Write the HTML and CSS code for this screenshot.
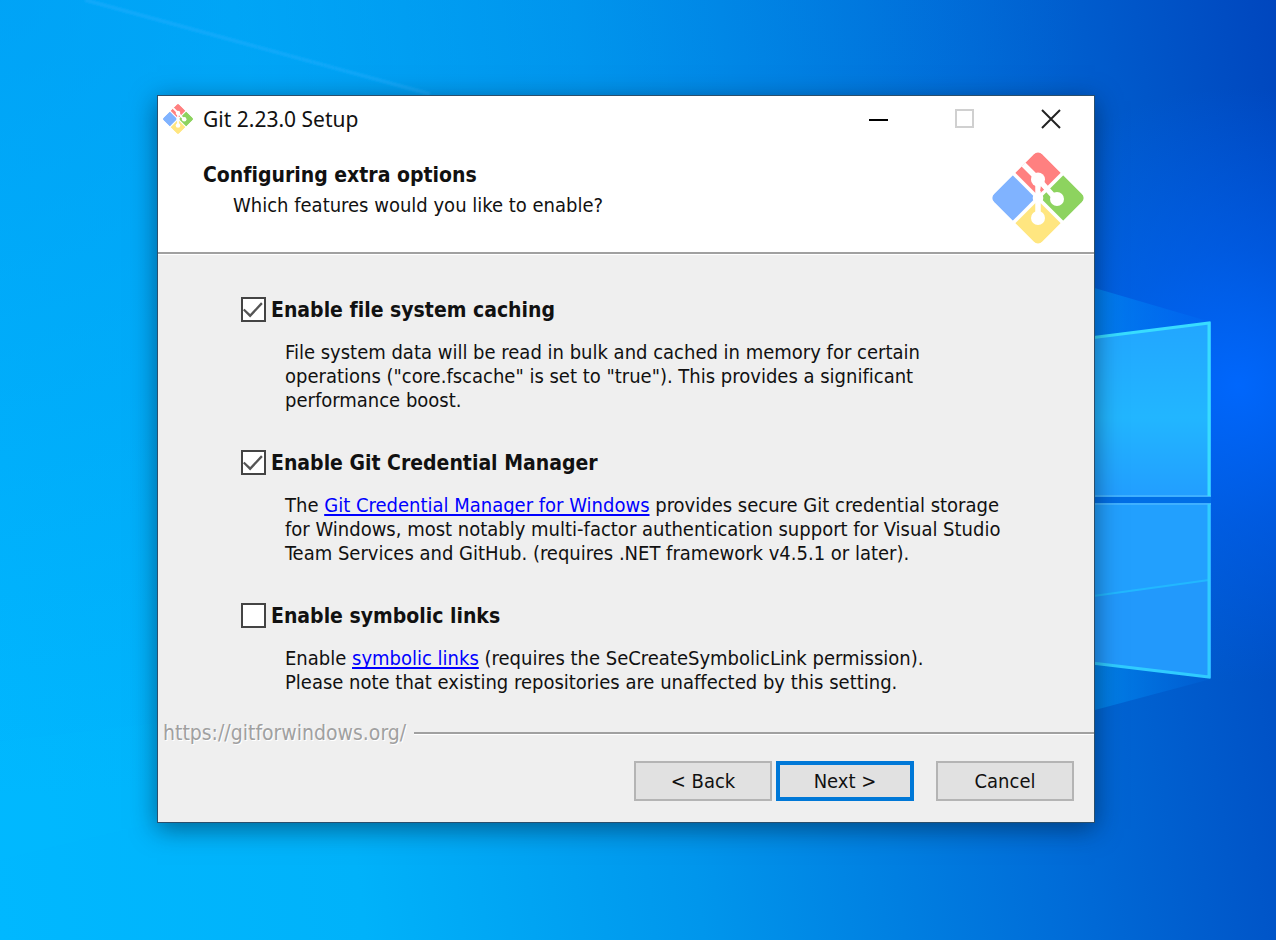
FILE: index.html
```html
<!DOCTYPE html>
<html lang="en">
<head>
<meta charset="utf-8">
<title>Git 2.23.0 Setup</title>
<link rel="stylesheet" href="styles.css">
</head>
<body>
<svg width="0" height="0" class="defs" aria-hidden="true">
  <symbol id="git-logo" viewBox="-46 -46 92 92">
    <clipPath id="logo-shape"><rect x="-34" y="-34" width="68" height="68" rx="6" transform="rotate(45)"/></clipPath>
    <g clip-path="url(#logo-shape)">
      <g transform="rotate(45)">
        <rect x="-34" y="-34" width="32.2" height="32.2" fill="#ff8080"/>
        <rect x="1.8" y="-34" width="32.2" height="32.2" fill="#8dd35f"/>
        <rect x="-34" y="1.8" width="32.2" height="32.2" fill="#80b3ff"/>
        <rect x="1.8" y="1.8" width="32.2" height="32.2" fill="#ffe680"/>
      </g>
      <path d="M-17-36L0-19L18 1M0-18V20" fill="none" stroke="#fff" stroke-width="5.500"/>
      <circle r="5.3" fill="#fff"/>
      <circle cy="-18.500" r="7" fill="#fff"/>
      <circle cx="19" cy="1" r="7" fill="#fff"/>
      <circle cy="20" r="7" fill="#fff"/>
      <path d="M2-7L6-8L3-11Z" fill="#ff8080"/>
    </g>
  </symbol>
</svg>
<div class="desktop">
  <svg class="wallpaper" viewBox="0 0 1276 940" preserveAspectRatio="none" aria-hidden="true">
    <defs>
      <linearGradient id="pane-top" x1="0" y1="0" x2="0" y2="1">
        <stop offset="0" stop-color="#22a6ff"/><stop offset=".55" stop-color="#22b6ff"/><stop offset="1" stop-color="#229eff"/>
      </linearGradient>
      <linearGradient id="beam" x1="0" x2="1"><stop offset="0" stop-color="#00b0ff" stop-opacity=".6"/><stop offset="1" stop-color="#0080ff" stop-opacity=".1"/></linearGradient>
      <filter id="soft"><feGaussianBlur stdDeviation="1"/></filter>
    </defs>
    <path d="M85 0L430 94" stroke="#20b0ff" stroke-opacity=".45" stroke-width="4" filter="url(#soft)"/>
    <path d="M0 741L157 723V822L0 860Z" fill="#00baff" fill-opacity=".18"/>
    <path d="M1050 275L1211 322L1050 345Z" fill="url(#beam)"/>
    <path d="M1050 655L1211 679L1050 722Z" fill="url(#beam)"/>
    <path d="M1050 343L1211 322V496H1050Z" fill="url(#pane-top)"/>
    <path d="M1050 504H1211V678L1050 658Z" fill="#2299fc"/>
    <path d="M1050 602L1209 580V504H1050Z" fill="#22a8ff" fill-opacity=".5"/>
    <path d="M1050 602L1209 580" stroke="#22b8ff" stroke-width="2"/>
    <path d="M1050 496H1211M1050 504H1211" stroke="#3fb0ff" stroke-width="2"/>
    <path d="M1050 497H1211V503H1050Z" fill="#006ee6"/>
    <path d="M1050 343L1209 323V496" fill="none" stroke="#38dcff" stroke-width="3"/>
    <path d="M1209 504V677L1050 658" fill="none" stroke="#30ccff" stroke-width="3"/>
  </svg>
  <main class="window">
    <header class="titlebar">
      <svg class="app-icon" aria-hidden="true"><use href="#git-logo"/></svg>
      <span class="title">Git 2.23.0 Setup</span>
      <button class="caption" aria-label="Minimize"><svg viewBox="0 0 20 20"><path d="M0 11H19" stroke="#000" stroke-width="2"/></svg></button>
      <button class="caption" aria-label="Maximize" disabled><svg viewBox="0 0 20 20"><path d="M1 1H18V18H1Z" fill="none" stroke="#d0d0d0" stroke-width="2"/></svg></button>
      <button class="caption" aria-label="Close"><svg viewBox="0 0 20 20"><path d="M1 1L19 19M19 1L1 19" stroke="#222" stroke-width="2"/></svg></button>
    </header>
    <section class="banner">
      <div>
        <h1>Configuring extra options</h1>
        <p>Which features would you like to enable?</p>
      </div>
      <svg class="logo" aria-hidden="true"><use href="#git-logo"/></svg>
    </section>
    <form class="options">
      <div class="option">
        <label><input type="checkbox" checked>Enable file system caching</label>
        <p>File system data will be read in bulk and cached in memory for certain<br>operations ("core.fscache" is set to "true"). This provides a significant<br>performance boost.</p>
      </div>
      <div class="option">
        <label><input type="checkbox" checked>Enable Git Credential Manager</label>
        <p>The <a href="#gcm">Git Credential Manager for Windows</a> provides secure Git credential storage<br>for Windows, most notably multi-factor authentication support for Visual Studio<br>Team Services and GitHub. (requires .NET framework v4.5.1 or later).</p>
      </div>
      <div class="option">
        <label><input type="checkbox">Enable symbolic links</label>
        <p>Enable <a href="#symlinks">symbolic links</a> (requires the SeCreateSymbolicLink permission).<br>Please note that existing repositories are unaffected by this setting.</p>
      </div>
    </form>
    <div class="divider"><span>https://gitforwindows.org/</span></div>
    <footer class="actions">
      <button class="btn">&lt; Back</button>
      <button class="btn primary">Next &gt;</button>
      <button class="btn cancel">Cancel</button>
    </footer>
  </main>
</div>
</body>
</html>
```
FILE: styles.css
```css
* { box-sizing: border-box; }
body {
  margin: 0;
  font: 20px/24px "DejaVu Sans Condensed", "Noto Sans", sans-serif;
  font-variant-ligatures: none;
  color: #111;
}
h1, p { margin: 0; }
.defs { position: absolute; }
.desktop {
  position: relative;
  display: flex;
  align-items: center;
  justify-content: center;
  min-height: 100vh;
  padding: 0 24px 22px 0;
  overflow: hidden;
  background:
    radial-gradient(circle at 97% 41%, rgba(0, 104, 255, .95) 0, rgba(0, 100, 250, .5) 10%, rgba(0, 90, 230, 0) 22%),
    radial-gradient(ellipse at 0 0, rgba(0, 145, 240, .5), rgba(0, 140, 235, 0) 60%),
    linear-gradient(82deg, #00b8ff 0%, #00b2fa 26%, #0096ec 50%, #006cd8 76%, #0046be 100%);
}
.wallpaper {
  position: absolute;
  inset: 0;
  width: 100%;
  height: 100%;
}
.window {
  position: relative;
  width: 938px;
  max-width: 100%;
  border: 1px solid #2b4f6c;
  background: #efefef;
  box-shadow: 0 6px 24px rgba(0, 20, 40, .5);
}
.titlebar {
  display: flex;
  align-items: center;
  height: 46px;
  padding-left: 5px;
  background: #fff;
}
.app-icon { width: 30px; height: 30px; }
.title {
  flex: 1;
  padding-left: 10px;
  font-family: "Noto Sans", sans-serif;
  font-size: 21px;
}
.caption {
  display: grid;
  place-items: center;
  width: 86px;
  height: 46px;
  padding: 0;
  border: 0;
  background: none;
}
.caption svg { width: 20px; height: 20px; }
.banner {
  display: flex;
  justify-content: space-between;
  padding: 10px 10px 8px 45px;
  border-bottom: 2px solid #a0a0a0;
  background: #fff;
}
h1 {
  padding-top: 11px;
  font-size: 21px;
  line-height: 24px;
}
.banner p { padding: 6px 0 0 30px; }
.logo { width: 92px; height: 92px; }
.options {
  padding: 42px 20px 0 83px;
  border-top: 1px solid #fff;
}
.option { margin-bottom: 38px; }
.option:last-child { margin-bottom: 27px; }
label {
  display: flex;
  align-items: center;
  gap: 5px;
  font-size: 21px;
  font-weight: bold;
}
input {
  appearance: none;
  display: grid;
  width: 25px;
  height: 25px;
  margin: 0;
  border: 2px solid #444;
  background: #fff;
}
input:checked::before {
  content: "";
  background: #555;
  clip-path: polygon(7% 46%, 34% 72%, 86% 16%, 94% 24%, 34% 88%, 0 54%);
}
.option p { padding: 18px 0 0 44px; }
a { color: #00f; text-underline-offset: 2px; text-decoration-thickness: 2px; text-decoration-skip-ink: none; }
.divider {
  display: flex;
  align-items: center;
  gap: 8px;
  padding-left: 5px;
  color: #a0a0a0;
  font-size: 21px;
  text-shadow: 1px 1px #fff;
}
.divider::after {
  content: "";
  flex: 1;
  border-top: 2px solid #a0a0a0;
  border-bottom: 1px solid #fff;
}
.actions {
  display: flex;
  justify-content: flex-end;
  gap: 4px;
  padding: 16px 20px 21px;
}
.btn {
  width: 138px;
  height: 40px;
  border: 2px solid #b4b4b4;
  background: #e1e1e1;
  font: inherit;
  color: #111;
}
.primary { border: 4px solid #0078d7; }
.cancel { margin-left: 18px; }
```
